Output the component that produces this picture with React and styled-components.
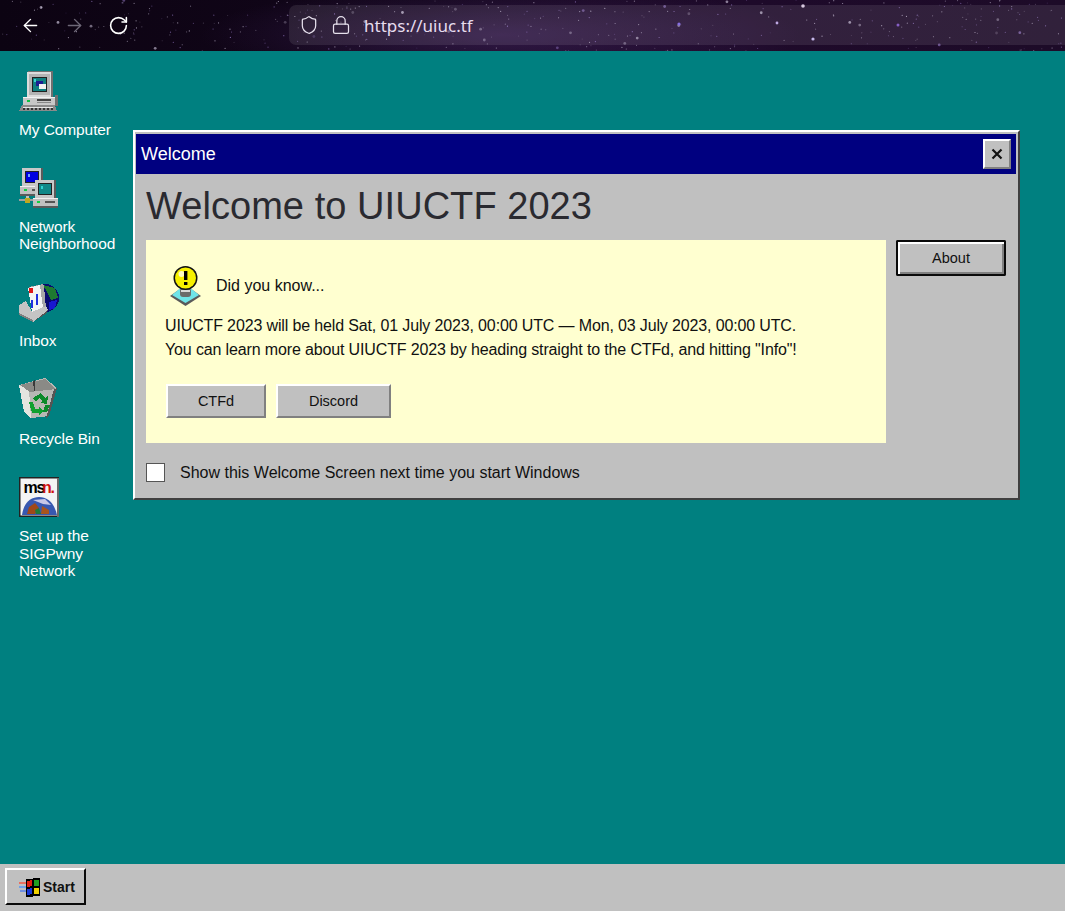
import React from 'react';
import styled, { createGlobalStyle } from 'styled-components';
import { ArrowLeft, ArrowRight, RotateCw, Shield, Lock } from 'lucide-react';

const UI_FONT = '"Liberation Sans", Arial, sans-serif';

const GlobalStyle = createGlobalStyle`
  html, body {
    margin: 0;
    padding: 0;
    height: 100%;
    overflow: hidden;
    background: #008080;
  }
  * {
    box-sizing: border-box;
  }
`;

const Page = styled.div`
  height: 100vh;
  display: grid;
  grid-template-rows: 51px 1fr 47px;
  font-family: ${UI_FONT};
`;

/* browser chrome */
const BrowserBar = styled.header`
  position: relative;
  display: flex;
  align-items: center;
  padding: 5px 0 6px 20px;
  overflow: hidden;
  background:
    radial-gradient(ellipse 300px 50px at 500px 35px, rgba(90, 50, 130, 0.4), transparent),
    linear-gradient(90deg, #0c0312 0%, #12061a 40%, #1e0a2a 70%, #1d0b28 100%);
`;

const Stars = styled.svg`
  position: absolute;
  inset: 0;
  width: 100%;
  height: 100%;
`;

const NavButtons = styled.nav`
  position: relative;
  display: flex;
  align-items: center;
  gap: 23px;
  width: 269px;
`;

const AddressBar = styled.div`
  position: relative;
  flex: 1;
  align-self: stretch;
  display: flex;
  align-items: center;
  gap: 12px;
  padding-left: 10px;
  border-radius: 7px 0 0 7px;
  background: rgba(255, 255, 255, 0.09);
  color: #e6e0ec;
`;

const Url = styled.span`
  margin-left: 1px;
  font-family: "Noto Sans", sans-serif;
  font-size: 17px;
  color: #e6dcee;
`;

/* desktop */
const Desktop = styled.main`
  position: relative;
  background: #008080;
  padding: 20px 0 0 19px;
`;

const IconColumn = styled.div`
  display: flex;
  flex-direction: column;
  gap: 29px;
  width: 100px;
`;

const DesktopIcon = styled.div`
  display: flex;
  flex-direction: column;
  gap: 10px;
  color: #fff;
  font-size: 15.5px;
  line-height: 17.6px;
  letter-spacing: -0.1px;
  white-space: pre-line;

  svg {
    display: block;
  }
`;

/* welcome window */
const Window = styled.section`
  position: absolute;
  left: 133px;
  top: 79px;
  width: 887px;
  height: 370px;
  padding: 2px 2px 0 1px;
  background: #c0c0c0;
  border-style: solid;
  border-width: 2px;
  border-color: #fff #404040 #404040 #fff;
  color: #111;
`;

const TitleBar = styled.div`
  display: flex;
  align-items: center;
  justify-content: space-between;
  height: 40px;
  padding: 0 5px;
  background: #000080;
  color: #fff;
  font-size: 18px;
`;

const CloseButton = styled.button`
  display: flex;
  align-items: center;
  justify-content: center;
  width: 28px;
  height: 30px;
  padding: 0;
  background: #c0c0c0;
  border-style: solid;
  border-width: 2px;
  border-color: #fff #808080 #808080 #fff;
  color: #111;
`;

const Heading = styled.h1`
  margin: 9px 0 0 10px;
  height: 57px;
  font-size: 38px;
  line-height: 46px;
  font-weight: 400;
  color: #2a2a30;
  letter-spacing: 0.05px;
`;

const Body = styled.div`
  display: flex;
  gap: 10px;
  padding: 0 10px;
`;

const TipPanel = styled.div`
  width: 740px;
  height: 203px;
  padding: 26px 19px 0;
  background: #ffffd0;
`;

const TipHeader = styled.div`
  display: flex;
  align-items: center;
  gap: 15px;
  padding-left: 5px;
  height: 40px;
  font-size: 16px;
`;

const TipText = styled.p`
  margin: 8px 0 0;
  font-size: 16px;
  line-height: 24px;
  letter-spacing: -0.14px;
  white-space: nowrap;
`;

const TipActions = styled.div`
  display: flex;
  gap: 10px;
  margin-top: 22px;
  padding-left: 1px;
`;

const Win95Button = styled.button`
  width: ${(p) => p.$width}px;
  height: ${(p) => p.$height}px;
  padding: 0;
  background: #c0c0c0;
  border-style: solid;
  border-width: 2px;
  border-color: #fff #808080 #808080 #fff;
  font-family: ${UI_FONT};
  font-size: 14.5px;
  color: #111;
`;

const DefaultButton = styled(Win95Button)`
  outline: 2px solid #0a0a0a;
  outline-offset: -2px;
  border-width: 4px;
  border-color: #0a0a0a;
  box-shadow: inset 2px 2px 0 #fff, inset -2px -2px 0 #808080;
  border-width: 2px;
  border-radius: 2px;
`;

const Footer = styled.label`
  display: flex;
  align-items: center;
  gap: 15px;
  margin: 20px 0 0 10px;
  font-size: 16px;
  color: #111;
`;

const Checkbox = styled.span`
  flex: none;
  width: 19px;
  height: 19px;
  background: #fff;
  border: 1px solid #555;
`;

/* taskbar */
const Taskbar = styled.footer`
  display: flex;
  align-items: flex-start;
  padding: 4px 5px;
  background: #c0c0c0;
`;

const StartButton = styled.button`
  display: flex;
  align-items: center;
  gap: 2px;
  width: 81px;
  height: 37px;
  padding: 0 0 0 12px;
  background: #c0c0c0;
  border-style: solid;
  border-width: 2px;
  border-color: #fff #0a0a0a #0a0a0a #fff;
  font-family: ${UI_FONT};
  font-size: 14px;
  font-weight: 700;
  color: #111;
`;

// small seeded generator so the starfield stays the same on each load
const makeStars = (count) => {
  let seed = 20230701;
  const next = () => {
    seed = (seed * 16807) % 2147483647;
    return seed / 2147483647;
  };
  return Array.from({ length: count }, () => ({
    x: next() * 1065,
    y: next() * 51,
    r: next() < 0.06 ? 1.4 : 0.6,
    o: 0.15 + next() * 0.55,
    c: next() < 0.35 ? '#a98be0' : '#d8cfe6',
  }));
};

const STARS = makeStars(420);

const StarField = () => (
  <Stars aria-hidden="true">
    {STARS.map((s, i) => (
      <circle key={i} cx={s.x} cy={s.y} r={s.r} fill={s.c} opacity={s.o} />
    ))}
    <circle cx="803" cy="6" r="1.8" fill="#e8d8ee" opacity="0.9" />
    <circle cx="679" cy="24" r="1.6" fill="#7a60e0" />
    <circle cx="777" cy="23" r="1.4" fill="#b8a0e0" />
    <circle cx="813" cy="39" r="1.6" fill="#c0b0e8" />
    <circle cx="898" cy="25" r="1.5" fill="#7a50c0" />
  </Stars>
);

const ComputerIcon = () => (
  <svg width="40" height="40" viewBox="0 0 40 40" shapeRendering="crispEdges">
    <rect x="9" y="0" width="25" height="27" fill="#6f6f6f" />
    <rect x="8" y="1" width="24" height="25" fill="#dcdcdc" />
    <rect x="10" y="3" width="21" height="21" fill="#b4b4b4" />
    <rect x="13" y="6" width="15" height="15" fill="#202020" />
    <rect x="14" y="7" width="13" height="13" fill="#0f7f80" />
    <rect x="17" y="10" width="7" height="5" fill="#1c1c90" />
    <rect x="20" y="13" width="7" height="5" fill="#f2f2f2" />
    <rect x="15" y="8" width="2" height="3" fill="#3fd0d0" />
    <rect x="4" y="26" width="35" height="9" fill="#c8c8c8" />
    <rect x="36" y="24" width="3" height="11" fill="#707070" />
    <rect x="4" y="26" width="32" height="1" fill="#f2f2f2" />
    <rect x="8" y="29" width="3" height="2" fill="#10c040" />
    <rect x="18" y="28" width="14" height="2" fill="#444" />
    <rect x="18" y="31" width="14" height="1" fill="#888" />
    <polygon points="3,34 36,34 38,40 0,40" fill="#8a8a8a" />
    <rect x="4" y="36" width="30" height="1" fill="#e6e6e6" />
    {[4, 8, 12, 16, 20, 24, 28, 32].map((x) => (
      <rect key={x} x={x} y="37" width="2" height="2" fill="#333" />
    ))}
  </svg>
);

const SmallPc = ({ x, y, screen }) => (
  <g>
    <rect x={x} y={y} width="20" height="18" fill="#c8c8c8" />
    <rect x={x + 19} y={y} width="2" height="18" fill="#5a5a5a" />
    <rect x={x + 3} y={y + 3} width="14" height="12" fill="#222" />
    <rect x={x + 4} y={y + 4} width="12" height="10" fill={screen} />
    <rect x={x + 6} y={y + 6} width="2" height="3" fill={screen === '#0000e0' ? '#70a0ff' : '#30d0d0'} />
    <rect x={x - 2} y={y + 18} width="25" height="9" fill="#c0c0c0" />
    <rect x={x - 2} y={y + 18} width="25" height="1" fill="#f0f0f0" />
    <rect x={x - 2} y={y + 26} width="25" height="2" fill="#5a5a5a" />
    <rect x={x + 2} y={y + 21} width="3" height="2" fill="#10d040" />
    <rect x={x + 10} y={y + 21} width="10" height="2" fill="#555" />
  </g>
);

const NetworkIcon = () => (
  <svg width="40" height="40" viewBox="0 0 40 40" shapeRendering="crispEdges">
    <SmallPc x={3} y={0} screen="#0000e0" />
    <rect x="7" y="28" width="3" height="7" fill="#c0c0c0" />
    <rect x="0" y="31" width="14" height="2" fill="#a0a0a0" />
    <rect x="6" y="30" width="5" height="5" fill="#c0a820" />
    <SmallPc x={16} y={12} screen="#108888" />
  </svg>
);

const InboxIcon = () => (
  <svg width="40" height="40" viewBox="0 0 40 40" shapeRendering="crispEdges">
    <circle cx="26" cy="16" r="14" fill="#0a0a70" />
    <path d="M24 3 L36 6 L39 16 L32 18 L28 10 Z" fill="#1e7a30" />
    <path d="M30 20 L38 18 L36 26 L30 28 Z" fill="#1818d0" />
    <polygon points="10,5 24,2 25,4 27,26 13,28" fill="#a8a8a8" />
    <polygon points="9,6 21,3 24,26 13,30" fill="#f4f4f4" />
    <rect x="10" y="6" width="4" height="5" fill="#e01818" />
    <rect x="17" y="12" width="2" height="11" fill="#2030e0" />
    <rect x="12" y="18" width="2" height="8" fill="#2030e0" />
    <polygon points="0,23 7,19 13,30 27,24 29,28 14,40 0,32" fill="#c4c4c4" />
    <polygon points="14,40 29,28 28,31 14,40" fill="#555" />
    <polygon points="0,31 14,38 14,40 0,33" fill="#808080" />
  </svg>
);

const RecycleIcon = () => (
  <svg width="40" height="42" viewBox="0 0 40 42" shapeRendering="crispEdges">
    <polygon points="0,7 26,0 38,10 30,38 12,40 5,34" fill="#b8b8b4" />
    <polygon points="0,7 5,34 12,40 10,12" fill="#e4e4e0" />
    <polygon points="1,7 26,1 37,11 11,14" fill="#8a8a86" />
    <polygon points="14,3 15,13 16,13 16,2" fill="#3a3a3a" />
    <polygon points="38,10 30,38 27,40 35,11" fill="#555" />
    <path d="M14 20 L22 15 L26 20 L29 18 L28 26 L21 25 L23 23 L20 20 L17 24 Z" fill="#0b8a2a" />
    <path d="M10 24 L14 24 L16 31 L20 31 L20 28 L24 33 L20 37 L20 35 L13 35 Z" fill="#10a030" />
    <path d="M26 27 L31 27 L28 34 L24 34 Z" fill="#0b8a2a" />
  </svg>
);

const MsnText = styled.text`
  font-family: ${UI_FONT};
  font-size: 16px;
  font-weight: 700;
  letter-spacing: -1.2px;
`;

const MsnIcon = () => (
  <svg width="40" height="40" viewBox="0 0 40 40">
    <rect width="40" height="40" fill="#222" />
    <rect x="1.5" y="1.5" width="37" height="37" fill="#f4f4f4" />
    <rect x="38" y="1" width="2" height="39" fill="#6a6a6a" />
    <MsnText x="4.5" y="16" fill="#000">ms</MsnText>
    <MsnText x="23" y="16" fill="#d01010">n.</MsnText>
    <path d="M3 38 C5 24 13 20 20 20 C28 20 35 25 38 38 Z" fill="#3858b0" />
    <path d="M8 37 L10 30 L16 26 L20 31 L16 37 Z" fill="#a04818" />
    <path d="M22 37 L23 29 L30 33 L30 37 Z" fill="#a8541c" />
    <path d="M14 23 L26 22 L32 28 L24 27 Z" fill="#c8c8e8" />
    <path d="M16 33 L20 31 L22 37 L17 37 Z" fill="#1f7a38" />
  </svg>
);

const BulbIcon = () => (
  <svg width="31" height="40" viewBox="0 0 31 40">
    <polygon points="15.5,19 31,30 15.5,40 0,30" fill="#5a5a5a" />
    <polygon points="15.5,18 29,29 15.5,37 2,29" fill="#6fe4e8" />
    <rect x="10" y="22" width="11" height="9" rx="3" fill="#6a6a6a" />
    <rect x="11" y="24" width="9" height="2" fill="#d8d8d8" />
    <circle cx="15.5" cy="12" r="12" fill="#111" />
    <circle cx="15.5" cy="12" r="10.5" fill="#f6f000" />
    <circle cx="11.5" cy="8" r="3" fill="#fffcc0" />
    <rect x="14" y="5" width="3.4" height="9" fill="#000" />
    <rect x="14" y="16" width="3.4" height="3" fill="#000" />
  </svg>
);

const WindowsFlag = () => (
  <svg width="22" height="20" viewBox="0 0 22 20" shapeRendering="crispEdges">
    <rect x="0" y="5" width="7" height="2" fill="#e87060" />
    <rect x="0" y="9" width="7" height="2" fill="#70a0e8" />
    <rect x="1" y="13" width="6" height="2" fill="#7090e0" />
    <polygon points="7,2 21,1 21,19 7,20" fill="#000" />
    <polygon points="8,4 13,3 13,9 8,10" fill="#e02010" />
    <polygon points="15,3 20,3 20,9 15,9" fill="#20a020" />
    <polygon points="8,12 13,11 13,17 8,18" fill="#1838d8" />
    <polygon points="15,11 20,11 20,17 15,17" fill="#f0d000" />
  </svg>
);

const desktopItems = [
  { label: 'My Computer', Icon: ComputerIcon },
  { label: 'Network\nNeighborhood', Icon: NetworkIcon },
  { label: 'Inbox', Icon: InboxIcon },
  { label: 'Recycle Bin', Icon: RecycleIcon },
  { label: 'Set up the\nSIGPwny\nNetwork', Icon: MsnIcon },
];

const App = () => (
  <Page>
    <GlobalStyle />
    <BrowserBar>
      <StarField />
      <NavButtons>
        <ArrowLeft size={21} color="#fff" strokeWidth={1.6} />
        <ArrowRight size={21} color="#6e6878" strokeWidth={1.6} />
        <RotateCw size={21} color="#fff" strokeWidth={1.8} />
      </NavButtons>
      <AddressBar>
        <Shield size={20} strokeWidth={1.5} />
        <Lock size={20} strokeWidth={1.5} />
        <Url>https://uiuc.tf</Url>
      </AddressBar>
    </BrowserBar>

    <Desktop>
      <IconColumn>
        {desktopItems.map(({ label, Icon }) => (
          <DesktopIcon key={label}>
            <Icon />
            <span>{label}</span>
          </DesktopIcon>
        ))}
      </IconColumn>

      <Window>
        <TitleBar>
          <span>Welcome</span>
          <CloseButton aria-label="Close">
            <svg width="12" height="12" viewBox="0 0 12 12">
              <path d="M1.5 1.5 L10.5 10.5 M10.5 1.5 L1.5 10.5" stroke="#111" strokeWidth="2.2" />
            </svg>
          </CloseButton>
        </TitleBar>
        <Heading>Welcome to UIUCTF 2023</Heading>
        <Body>
          <TipPanel>
            <TipHeader>
              <BulbIcon />
              <span>Did you know...</span>
            </TipHeader>
            <TipText>
              UIUCTF 2023 will be held Sat, 01 July 2023, 00:00 UTC — Mon, 03 July 2023, 00:00 UTC.
              <br />
              You can learn more about UIUCTF 2023 by heading straight to the CTFd, and hitting "Info"!
            </TipText>
            <TipActions>
              <Win95Button $width={100} $height={34}>CTFd</Win95Button>
              <Win95Button $width={115} $height={34}>Discord</Win95Button>
            </TipActions>
          </TipPanel>
          <DefaultButton $width={110} $height={36}>About</DefaultButton>
        </Body>
        <Footer>
          <Checkbox />
          <span>Show this Welcome Screen next time you start Windows</span>
        </Footer>
      </Window>
    </Desktop>

    <Taskbar>
      <StartButton>
        <WindowsFlag />
        Start
      </StartButton>
    </Taskbar>
  </Page>
);

export default App;
